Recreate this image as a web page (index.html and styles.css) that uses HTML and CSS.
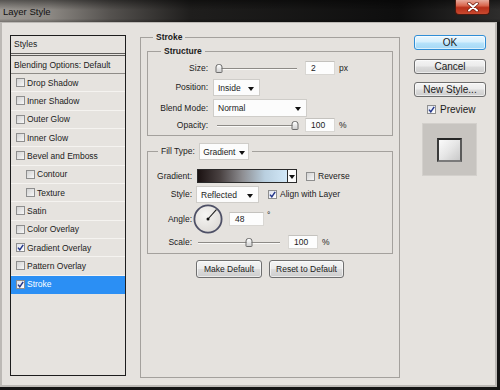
FILE: index.html
```html
<!DOCTYPE html>
<html lang="en">
<head>
  <meta charset="UTF-8" />
  <title>Layer Style</title>
  <link rel="stylesheet" href="styles.css">
</head>
<body>
  <div class="window">
    <div class="titlebar">
      <span class="title">Layer Style</span>
      <span class="close">
        <svg width="12" height="10" viewBox="0 0 12 10">
          <path d="M2 1.5 L10 8.5 M10 1.5 L2 8.5" stroke="#6b1a0c" stroke-width="3.4" stroke-linecap="round"/>
          <path d="M2 1.5 L10 8.5 M10 1.5 L2 8.5" stroke="#fff" stroke-width="2" stroke-linecap="round"/>
        </svg>
      </span>
    </div>

    <div class="dialog">
      <!-- styles list -->
      <div class="styles">
        <div class="styles-head">Styles</div>
        <div class="styles-blend">Blending Options: Default</div>
        <div class="style-row"><span class="cb"></span>Drop Shadow</div>
        <div class="style-row"><span class="cb"></span>Inner Shadow</div>
        <div class="style-row"><span class="cb"></span>Outer Glow</div>
        <div class="style-row"><span class="cb"></span>Inner Glow</div>
        <div class="style-row"><span class="cb"></span>Bevel and Emboss</div>
        <div class="style-row sub"><span class="cb"></span>Contour</div>
        <div class="style-row sub"><span class="cb"></span>Texture</div>
        <div class="style-row"><span class="cb"></span>Satin</div>
        <div class="style-row"><span class="cb"></span>Color Overlay</div>
        <div class="style-row"><span class="cb on"><svg width="7" height="7" viewBox="0 0 7 7"><path d="M1 3.6 L2.8 5.8 L6.2 0.8" fill="none" stroke="#23368a" stroke-width="1.5"/></svg></span>Gradient Overlay</div>
        <div class="style-row"><span class="cb"></span>Pattern Overlay</div>
        <div class="style-row active"><span class="cb on"><svg width="7" height="7" viewBox="0 0 7 7"><path d="M1 3.6 L2.8 5.8 L6.2 0.8" fill="none" stroke="#23368a" stroke-width="1.5"/></svg></span>Stroke</div>
      </div>

      <!-- stroke settings -->
      <fieldset class="group outer">
        <legend>Stroke</legend>

        <fieldset class="group inner structure">
          <legend>Structure</legend>
          <div class="row r-size">
            <span class="lbl">Size:</span>
            <div class="slider s-struct"><span class="thumb" style="left: 2%"></span></div>
            <span class="field">2</span><span class="unit">px</span>
          </div>
          <div class="row r-pos">
            <span class="lbl">Position:</span>
            <span class="select w-pos">Inside<i class="arrow"></i></span>
          </div>
          <div class="row r-blend">
            <span class="lbl">Blend Mode:</span>
            <span class="select w-blend">Normal<i class="arrow"></i></span>
          </div>
          <div class="row r-opac">
            <span class="lbl">Opacity:</span>
            <div class="slider s-struct"><span class="thumb" style="left: 98%"></span></div>
            <span class="field">100</span><span class="unit">%</span>
          </div>
        </fieldset>

        <fieldset class="group inner fill">
          <legend><span>Fill Type:</span><span class="select w-fill">Gradient<i class="arrow"></i></span></legend>
          <div class="row r-grad">
            <span class="lbl">Gradient:</span>
            <span class="gradient-bar"></span><span class="grad-drop"><i class="arrow"></i></span>
            <span class="cb cb-gap"></span><span class="cb-text">Reverse</span>
          </div>
          <div class="row r-style">
            <span class="lbl">Style:</span>
            <span class="select w-style">Reflected<i class="arrow"></i></span>
            <span class="cb on cb-gap"><svg width="7" height="7" viewBox="0 0 7 7"><path d="M1 3.6 L2.8 5.8 L6.2 0.8" fill="none" stroke="#23368a" stroke-width="1.5"/></svg></span><span class="cb-text">Align with Layer</span>
          </div>
          <div class="row r-angle">
            <span class="lbl">Angle:</span>
            <svg class="dial" width="30" height="30" viewBox="0 0 30 30">
              <defs>
                <radialGradient id="dialfill" cx="40%" cy="35%" r="70%">
                  <stop offset="0" stop-color="#f6f5f3"/>
                  <stop offset="1" stop-color="#dddad6"/>
                </radialGradient>
              </defs>
              <circle cx="15" cy="15" r="13.6" fill="url(#dialfill)" stroke="#4e5066" stroke-width="1.8"/>
              <line x1="15" y1="15" x2="23.4" y2="5.7" stroke="#1a1a1a" stroke-width="1.1"/>
              <circle cx="15" cy="15" r="1.5" fill="#111"/>
            </svg>
            <span class="field w-angle">48</span><span class="unit deg">°</span>
          </div>
          <div class="row r-scale">
            <span class="lbl">Scale:</span>
            <div class="slider s-scale"><span class="thumb" style="left: 62%"></span></div>
            <span class="field">100</span><span class="unit">%</span>
          </div>
        </fieldset>

        <div class="actions">
          <button class="btn w-make">Make Default</button>
          <button class="btn w-reset">Reset to Default</button>
        </div>
      </fieldset>

      <!-- right column -->
      <div class="side">
        <button class="btn side-btn ok">OK</button>
        <button class="btn side-btn">Cancel</button>
        <button class="btn side-btn">New Style...</button>
        <div class="preview-check">
          <span class="cb on"><svg width="7" height="7" viewBox="0 0 7 7"><path d="M1 3.6 L2.8 5.8 L6.2 0.8" fill="none" stroke="#23368a" stroke-width="1.5"/></svg></span>
          <span>Preview</span>
        </div>
        <div class="preview">
          <div class="swatch"></div>
        </div>
      </div>
    </div>
  </div>
</body>
</html>
```

FILE: styles.css
```css
* {
  box-sizing: border-box;
}
body {
  margin: 0;
  background: #141414;
  font-family: "Liberation Sans", Arial, sans-serif;
  font-size: 8.5px;
  color: #1b1b1b;
}
.window {
  width: 500px;
  height: 390px;
  background: #141414;
  overflow: hidden;
}
.titlebar {
  height: 22px;
  display: flex;
  align-items: flex-start;
  padding-left: 3px;
  background:
    linear-gradient(to bottom, rgba(0,0,0,0.45) 0, rgba(0,0,0,0) 45%, rgba(0,0,0,0) 85%, rgba(0,0,0,0.25) 100%),
    linear-gradient(to right, #9d9994 0, #8c8883 50px, #55524f 110px, #1f1e1d 190px, #0e0e0e 400px, #2e2d2c 500px);
}
.title {
  font-size: 9.5px;
  line-height: 24px;
  color: #121212;
}
.close {
  margin-left: auto;
  margin-right: 10px;
  width: 35px;
  height: 15px;
  display: flex;
  align-items: center;
  justify-content: center;
  border: 1px solid #4a1a10;
  border-top: none;
  border-radius: 0 0 4px 4px;
  background: linear-gradient(#e8aa9c 0, #d9664e 40%, #b9301a 55%, #c8492f 100%);
}
.dialog {
  width: 497px;
  height: 365px;
  background: #e5e2de;
  border: solid #bcb9b5;
  border-width: 1px 2px 2px 2px;
  display: flex;
  align-items: flex-start;
  padding: 8.5px 0 0 8px;
}

/* styles list */
.styles {
  width: 116px;
  height: 341px;
  margin-top: 3.5px;
  border: 1px solid #1d1d1d;
  background: #e6e3df;
}
.styles-head {
  height: 20px;
  line-height: 17px;
  padding-left: 3px;
  border-bottom: 3px double #5e5c5a;
}
.styles-blend {
  height: 18px;
  line-height: 18px;
  padding-left: 3px;
  border-bottom: 1px solid #8f8c88;
}
.style-row {
  height: 18.33px;
  display: flex;
  align-items: center;
  padding-left: 5px;
  border-bottom: 1px solid #f5f3f0;
}
.style-row.sub {
  padding-left: 15px;
}
.style-row.active {
  background: #2b8ff4;
  color: #fff;
  border-bottom-color: #2b8ff4;
}
.cb {
  width: 9px;
  height: 9px;
  flex-shrink: 0;
  margin-right: 2px;
  border: 1px solid #8e8e8e;
  background: linear-gradient(135deg, #d2d2d2, #f7f7f7);
  display: inline-flex;
  align-items: center;
  justify-content: center;
}
.cb.on {
  background: linear-gradient(135deg, #dfe3ee, #ffffff);
}

/* group boxes */
.group {
  margin: 0;
  padding: 0;
  min-width: 0;
  border: 1px solid #a4a19d;
}
.group legend {
  padding: 0 3px;
  line-height: 11px;
  font-weight: bold;
}
.outer {
  width: 260px;
  height: 346px;
  margin-left: 14px;
}
.outer > legend {
  margin-left: 12px;
}
.inner {
  margin: 3px 6px 0 6px;
}
.structure {
  padding: 3.5px 0 3px 0;
}
.structure > legend {
  margin-left: 13px;
}
.fill {
  margin-top: 7px;
  padding: 8px 0 2px 0;
}
.fill > legend {
  margin-left: 10px;
  font-weight: normal;
  display: flex;
  align-items: center;
  gap: 4.5px;
}

.row {
  display: flex;
  align-items: center;
}
.lbl {
  text-align: right;
  flex-shrink: 0;
}
.structure .lbl {
  width: 60px;
}
.fill .lbl {
  width: 44px;
}
.r-size { height: 16px; }
.r-pos { height: 22px; }
.r-blend { height: 20px; }
.r-opac { height: 14px; }
.r-grad { height: 16px; }
.r-style { height: 20px; }
.r-angle { height: 29px; }
.r-scale { height: 18px; }

.slider {
  position: relative;
  height: 10px;
  flex-shrink: 0;
}
.slider::before {
  content: "";
  position: absolute;
  left: 0;
  right: 0;
  top: 5px;
  border-top: 1px solid #8d8a86;
  border-bottom: 1px solid #faf9f7;
}
.s-struct {
  width: 80px;
  margin-left: 9px;
}
.s-scale {
  width: 82px;
  margin-left: 6px;
}
.thumb {
  position: absolute;
  top: 1px;
  width: 7px;
  height: 9px;
  transform: translateX(-50%);
  border: 1px solid #6c6c6c;
  border-radius: 3px 3px 1px 1px;
  background: linear-gradient(#ffffff, #cfcfcf);
}
.field {
  width: 30px;
  height: 14px;
  margin-left: 8px;
  padding-left: 5px;
  line-height: 13px;
  background: #fdfdfd;
  border: 1px solid #d9d7d3;
  border-top-color: #c4c2be;
}
.unit {
  margin-left: 4px;
}
.unit.deg {
  margin-left: 3px;
  align-self: flex-start;
  margin-top: 6px;
}
.select {
  position: relative;
  flex-shrink: 0;
  height: 17px;
  line-height: 16px;
  padding-left: 4px;
  background: #fcfcfc;
  border: 1px solid #cfcdc9;
}
.arrow {
  position: absolute;
  right: 5px;
  top: 7px;
  border-left: 3.5px solid transparent;
  border-right: 3.5px solid transparent;
  border-top: 4px solid #111;
}
.w-pos { width: 47px; margin-left: 5px; }
.w-blend { width: 94px; margin-left: 5px; height: 18px; line-height: 17px; }
.w-fill { width: 50px; padding-left: 3px; letter-spacing: -0.1px; }
.w-fill .arrow { right: 3px; }
.w-style { width: 63px; margin-left: 4px; }

.gradient-bar {
  width: 91px;
  height: 14px;
  margin-left: 5px;
  border: 1px solid #2a2a2a;
  background: linear-gradient(to right, #1b1212 0, #4a4242 25%, #8e8e92 50%, #b9cfdf 75%, #d2e8f8 100%);
}
.grad-drop {
  position: relative;
  width: 9px;
  height: 14px;
  background: #fafafa;
  border: 1px solid #2a2a2a;
  border-left: none;
}
.grad-drop .arrow {
  right: 1px;
  top: 5px;
}
.cb-gap {
  margin-left: 9px;
}
.cb-text {
  margin-left: 1px;
}
.dial {
  margin-left: 1px;
  flex-shrink: 0;
}
.w-angle {
  width: 35px;
  margin-left: 6px;
}

.actions {
  display: flex;
  justify-content: center;
  gap: 7px;
  margin-top: 6px;
}
.btn {
  height: 18px;
  padding: 0;
  font-family: "Liberation Sans", Arial, sans-serif;
  font-size: 8.5px;
  color: #1b1b1b;
  border: 1px solid #6f6f6f;
  border-radius: 3px;
  background: linear-gradient(#f4f4f4 0, #ebebeb 48%, #dcdcdc 52%, #cdcdcd 100%);
  box-shadow: inset 0 0 0 1px rgba(255,255,255,0.6);
}
.w-make { width: 66px; }
.w-reset { width: 75px; }

/* right column */
.side {
  width: 72px;
  margin-left: 14px;
  margin-top: 3.5px;
  display: flex;
  flex-direction: column;
}
.side-btn {
  height: 15px;
  font-size: 10px;
  margin-top: 8.5px;
}
.side-btn.ok {
  margin-top: 0;
  border-color: #2f8ed6;
  background: linear-gradient(#eaf7fe 0, #d4effd 48%, #b7e3fb 52%, #a3d8f5 100%);
}
.preview-check {
  display: flex;
  align-items: center;
  gap: 2px;
  margin: 8px 0 0 13px;
  height: 9px;
  font-size: 10px;
}
.preview {
  width: 55px;
  height: 53px;
  margin: 9px 0 0 8px;
  background: #c7c4c0;
  border: 1px solid #d3d0cc;
  display: flex;
  align-items: center;
  justify-content: center;
}
.swatch {
  width: 25px;
  height: 24px;
  border: 2px solid;
  border-color: #262626 #5a5a5a #7a7a7a #3a3a3a;
  background: linear-gradient(135deg, #fbfbfb 0, #e6e6e6 50%, #c9c9c9 100%);
}
```
